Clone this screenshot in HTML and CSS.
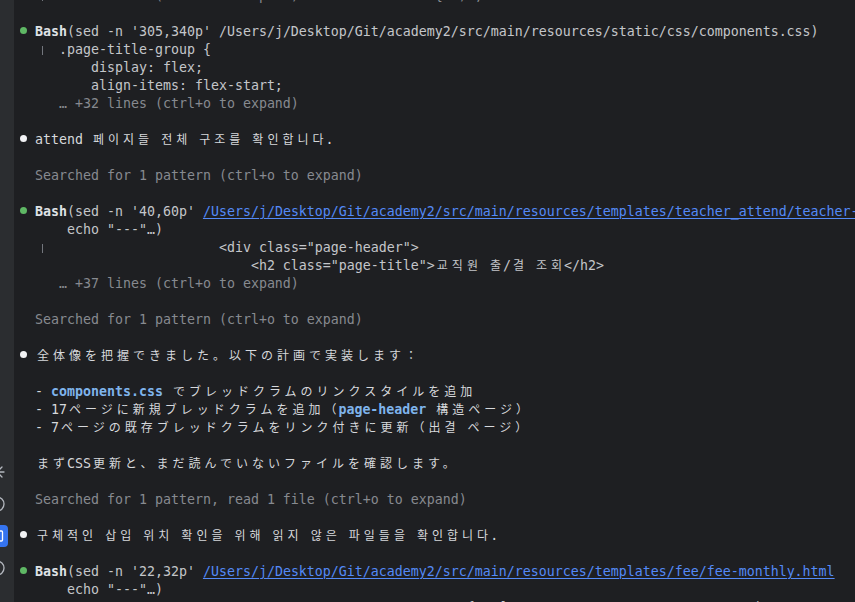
FILE: index.html
```html
<!DOCTYPE html>
<html lang="ja">
<head>
<meta charset="utf-8">
<title>Terminal</title>
<link rel="stylesheet" href="styles.css">
</head>
<body>
<div class="app">
  <aside class="gutter">
    <div class="tools">
      <svg class="tool" viewBox="0 0 22 22" width="22" height="22"><path d="M11 4v14M4 11h14M6 6l10 10M16 6L6 16" fill="none" stroke="#b4b8bf" stroke-width="1.3" stroke-linecap="round"/></svg>
      <svg class="tool" viewBox="0 0 22 22" width="22" height="22"><circle cx="11" cy="11" r="7" fill="none" stroke="#b4b8bf" stroke-width="1.3"/><path d="M9.5 8l3 3-3 3" fill="none" stroke="#b4b8bf" stroke-width="1.3" stroke-linecap="round" stroke-linejoin="round"/></svg>
      <svg class="tool" viewBox="0 0 22 22" width="22" height="22"><rect x="0" y="0" width="22" height="22" rx="4" fill="#3574f0"/><rect x="5.5" y="6" width="11" height="10" rx="1" fill="none" stroke="#ffffff" stroke-width="1.3"/></svg>
      <svg class="tool" viewBox="0 0 22 22" width="22" height="22"><circle cx="11" cy="11" r="7" fill="none" stroke="#b4b8bf" stroke-width="1.3"/><path d="M11 7.5v4" stroke="#b4b8bf" stroke-width="1.3" stroke-linecap="round"/></svg>
      <svg class="tool" viewBox="0 0 22 22" width="22" height="22"><circle cx="11" cy="5" r="2" fill="none" stroke="#b4b8bf" stroke-width="1.3"/><path d="M11 7v10" stroke="#b4b8bf" stroke-width="1.3"/></svg>
    </div>
  </aside>
  <main class="term">
    <div class="lines">
      <div class="ln dim">  <span class="tree"></span>  … +12 lines (ctrl+o to expand)                 {  ) ;</div>
      <div class="ln"> </div>
      <div class="ln"><span class="dot green"></span> <b class="cmd">Bash</b><span class="arg">(sed -n '305,340p' /Users/j/Desktop/Git/academy2/src/main/resources/static/css/components.css)</span></div>
      <div class="ln code">  <span class="tree"></span>  .page-title-group {</div>
      <div class="ln code">         display: flex;</div>
      <div class="ln code">         align-items: flex-start;</div>
      <div class="ln dim">     … +32 lines (ctrl+o to expand)</div>
      <div class="ln"> </div>
      <div class="ln msg"><span class="dot white"></span> attend <span class="kr">페이지들</span> <span class="kr">전체</span> <span class="kr">구조를</span> <span class="kr">확인합니다</span>.</div>
      <div class="ln"> </div>
      <div class="ln dim">  Searched for 1 pattern (ctrl+o to expand)</div>
      <div class="ln"> </div>
      <div class="ln"><span class="dot green"></span> <b class="cmd">Bash</b><span class="arg">(sed -n '40,60p' </span><span class="link">/Users/j/Desktop/Git/academy2/src/main/resources/templates/teacher_attend/teacher-attend-list.html</span></div>
      <div class="ln arg">      echo "---"…)</div>
      <div class="ln code">  <span class="tree"></span>                      &lt;div class="page-header"&gt;</div>
      <div class="ln code">                             &lt;h2 class="page-title"&gt;<span class="kr">교직원</span> <span class="kr">출</span>/<span class="kr">결</span> <span class="kr">조회</span>&lt;/h2&gt;</div>
      <div class="ln dim">     … +37 lines (ctrl+o to expand)</div>
      <div class="ln"> </div>
      <div class="ln dim">  Searched for 1 pattern (ctrl+o to expand)</div>
      <div class="ln"> </div>
      <div class="ln msg"><span class="dot white"></span> <span class="jp">全体像を把握できました。以下の計画で実装します：</span></div>
      <div class="ln"> </div>
      <div class="ln msg">  - <b class="hl">components.css</b> <span class="jp">でブレッドクラムのリンクスタイルを追加</span></div>
      <div class="ln msg">  - 17<span class="jp">ページに新規ブレッドクラムを追加（</span><b class="hl">page-header</b> <span class="jp">構造ページ）</span></div>
      <div class="ln msg">  - 7<span class="jp">ページの既存ブレッドクラムをリンク付きに更新（出결</span> <span class="jp">ページ）</span></div>
      <div class="ln"> </div>
      <div class="ln msg">  <span class="jp">まず</span>CSS<span class="jp">更新と、まだ読んでいないファイルを確認します。</span></div>
      <div class="ln"> </div>
      <div class="ln dim">  Searched for 1 pattern, read 1 file (ctrl+o to expand)</div>
      <div class="ln"> </div>
      <div class="ln msg"><span class="dot white"></span> <span class="kr">구체적인</span> <span class="kr">삽입</span> <span class="kr">위치</span> <span class="kr">확인을</span> <span class="kr">위해</span> <span class="kr">읽지</span> <span class="kr">않은</span> <span class="kr">파일들을</span> <span class="kr">확인합니다</span>.</div>
      <div class="ln"> </div>
      <div class="ln"><span class="dot green"></span> <b class="cmd">Bash</b><span class="arg">(sed -n '22,32p' </span><span class="link">/Users/j/Desktop/Git/academy2/src/main/resources/templates/fee/fee-monthly.html</span></div>
      <div class="ln arg">      echo "---"…)</div>
      <div class="ln code">  <span class="tree"></span>                        '                            {   [                               )</div>
    </div>
  </main>
</div>
</body>
</html>
```
FILE: styles.css
```css
html, body {
  margin: 0;
  padding: 0;
  background: #1e1f22;
  width: 855px;
  height: 602px;
  overflow: hidden;
}

.app {
  display: flex;
  width: 855px;
  height: 602px;
  overflow: hidden;
}

.gutter {
  flex: 0 0 14px;
  width: 14px;
  background: #2b2d30;
  overflow: hidden;
}

.tools {
  width: 34px;
  margin-left: -20px;
  padding-top: 461px;
  display: flex;
  flex-direction: column;
  align-items: center;
  gap: 10px;
}

.tool {
  display: block;
  flex: 0 0 22px;
}

.term {
  flex: 1 1 auto;
  min-width: 0;
  padding-left: 5px;
  overflow: hidden;
  font-family: "DejaVu Sans Mono", "Liberation Mono", monospace;
  font-size: 13.29px;
  color: #d3d5d9;
}

.lines {
  margin-top: -13px;
}

.ln {
  height: 18px;
  line-height: 18px;
  white-space: pre;
  overflow: hidden;
}

.dim {
  color: #878a90;
}

.code {
  color: #c4c6ca;
}

.arg {
  color: #c4c6ca;
}

.msg {
  color: #d6d8dc;
}

.cmd {
  font-weight: bold;
  color: #dfe1e5;
}

.hl {
  font-weight: bold;
  color: #7fb4ec;
}

.link {
  color: #548af7;
  text-decoration: underline;
  text-underline-offset: 2px;
  text-decoration-thickness: 1px;
}

.dot {
  display: inline-block;
  width: 7px;
  height: 7px;
  margin: 0 0.5px;
  border-radius: 50%;
  vertical-align: 2px;
}

.dot.green {
  background: #5fb865;
}

.dot.white {
  background: #f2f3f5;
}

.tree {
  display: inline-block;
  width: 8px;
  height: 9px;
  vertical-align: -1px;
  background: linear-gradient(#73767d, #73767d) 7px 0 / 1px 100% no-repeat;
}

.kr,
.jp {
  font-size: 12px;
  line-height: 12px;
  letter-spacing: 4px;
  padding-left: 2px;
  margin-right: -2px;
}

.kr {
  font-family: "Noto Sans CJK KR", "Noto Sans CJK JP", sans-serif;
}

.jp {
  font-family: "Noto Sans CJK JP", "Noto Sans CJK KR", sans-serif;
}
```
